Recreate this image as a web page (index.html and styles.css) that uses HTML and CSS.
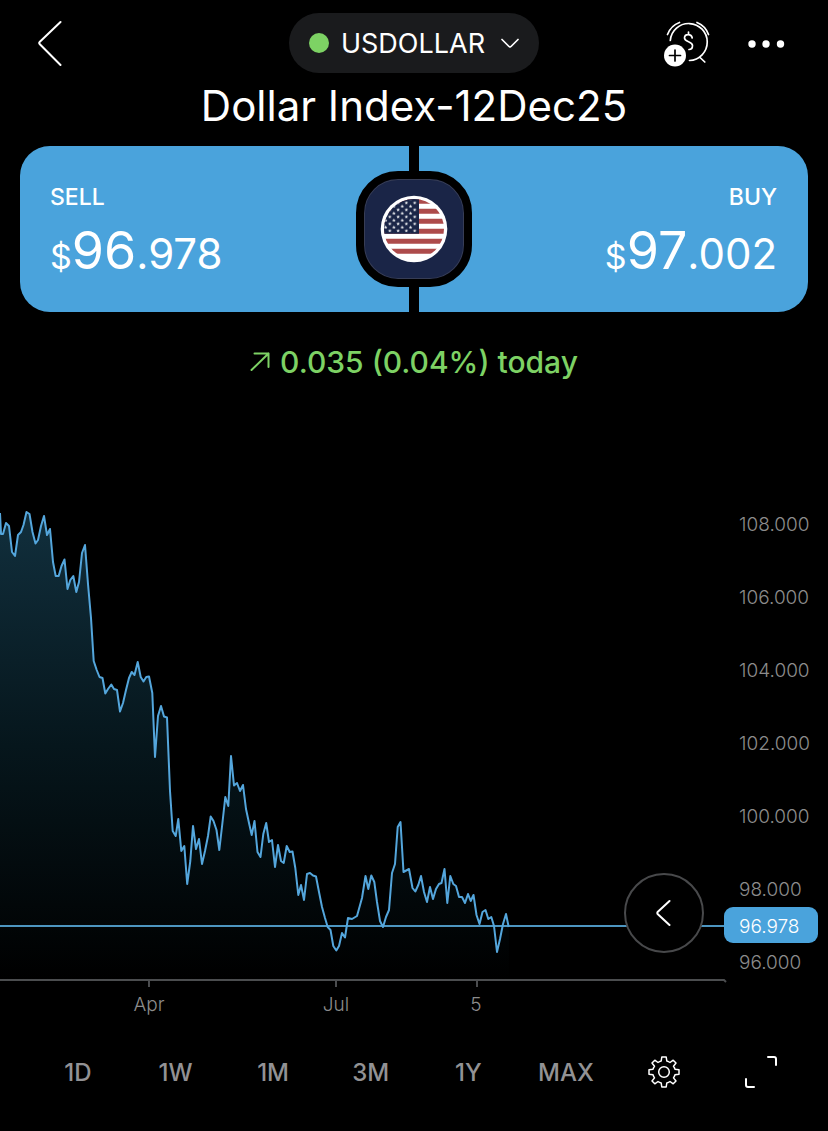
FILE: index.html
```html
<!DOCTYPE html>
<html lang="en">
<head>
<meta charset="utf-8">
<meta name="viewport" content="width=device-width, initial-scale=1">
<title>USDOLLAR</title>
<link rel="stylesheet" href="styles.css">
</head>
<body>
<header class="topbar">
  <button class="icon-button back" type="button" aria-label="Back">
    <svg width="26" height="48" viewBox="0 0 26 48" fill="none" stroke="#fff" stroke-width="2" stroke-linecap="round" stroke-linejoin="round"><path d="M22.500 3 1.600 23Q.8 24 1.600 25L22.500 46"/></svg>
  </button>
  <button class="symbol" type="button">
    <span class="status"></span>
    <span>USDOLLAR</span>
    <svg width="18" height="12" viewBox="0 0 18 12" fill="none" stroke="#fff" stroke-width="1.700" stroke-linecap="round" stroke-linejoin="round"><path d="M1 2.500 8 9.500Q9 10.500 10 9.500L17 2.500"/></svg>
  </button>
  <div class="actions">
    <button class="icon-button" type="button" aria-label="Add price alert">
      <svg width="48" height="48" viewBox="0 0 48 48" fill="none" stroke="#fff" stroke-width="1.700" stroke-linecap="round">
        <path d="M8.300 21.500A18.500 18.500 0 1 1 27.500 41.500M37.500 38 42.800 43"/>
        <path d="M5.500 15.500Q9 6.500 17.500 3.500M35 3.500Q43.500 7 46.500 15.500"/>
        <path d="M30.200 19C29.500 14.500 22.500 14.500 22.500 19 22.500 23.500 30.500 22 30.500 26.500 30.500 29 29 30.500 27 30.500M26.500 15V13"/>
        <circle cx="13" cy="36.500" r="11" fill="#fff" stroke="none"/>
        <path d="M13 31V42M7.500 36.500H18.500" stroke="#000"/>
      </svg>
    </button>
    <button class="icon-button" type="button" aria-label="More">
      <svg width="38" height="10" viewBox="0 0 38 10" fill="#fff"><circle cx="5" cy="6" r="3.700"/><circle cx="19" cy="6" r="3.700"/><circle cx="33.500" cy="6" r="3.700"/></svg>
    </button>
  </div>
</header>

<main>
  <h1 class="title">Dollar Index-12Dec25</h1>

  <section class="quotes">
    <button class="quote sell" type="button">
      <span class="side">SELL</span>
      <span class="price"><span class="currency">$</span><span class="whole">96</span>.978</span>
    </button>
    <button class="quote buy" type="button">
      <span class="side">BUY</span>
      <span class="price"><span class="currency">$</span><span class="whole">97</span>.002</span>
    </button>
    <div class="badge">
      <svg width="68" height="68" viewBox="0 0 68 68" role="img" aria-label="United States flag">
        <defs>
          <clipPath id="disc"><circle cx="34" cy="34" r="30"/></clipPath>
          <pattern id="stars" x="-.5" y="5.700" width="8.300" height="7" patternUnits="userSpaceOnUse">
            <path id="star" d="M2 .4 2.500 1.500 3.700 1.600 2.800 2.400 3.100 3.600 2 3 .9 3.600 1.200 2.400.3 1.600 1.500 1.500Z" fill="#fff"/>
            <use href="#star" x="4.150" y="3.400"/>
          </pattern>
        </defs>
        <circle cx="34" cy="34" r="33.300" fill="#fff"/>
        <g clip-path="url(#disc)">
          <path d="M0 3.700H68V8.700H0ZM0 13.700H68V18.700H0ZM0 23.700H68V28.700H0ZM0 33.700H68V38.700H0ZM0 43.700H68V48.700H0ZM0 53.700H68V58.700H0Z" fill="#ad4b4b"/>
          <path d="M0 0H39V38.700H0Z" fill="#1a2547"/>
          <path d="M3 5.700H37V37.300H3Z" fill="url(#stars)"/>
        </g>
      </svg>
    </div>
  </section>

  <p class="change">
    <svg width="20" height="20" viewBox="0 0 20 20" fill="none" stroke="currentColor" stroke-width="2" stroke-linecap="round" stroke-linejoin="round"><path d="M1.500 18 18.500 1.500M4.500 1.500H18.500V15"/></svg>
    <span>0.035 (0.04%) today</span>
  </p>

  <section class="chart">
    <svg class="plot" viewBox="0 490 828 530" role="img" aria-label="Price history">
      <defs>
        <linearGradient id="fade" gradientUnits="userSpaceOnUse" x1="0" y1="512" x2="0" y2="980">
          <stop offset="0" stop-color="#112f3d"/><stop offset=".5" stop-color="#06161c"/><stop offset="1" stop-color="#000"/>
        </linearGradient>
      </defs>
      <path class="area" d="M0 513 1 534 3 534 6 523 9 526 12 552 15 556 18 535 21 532 23.500 525 26.500 512 29.500 514 32.500 532 35.500 543.500 38 540 41 526 44 516 47 535 50 529 53 562 55.700 576 58.700 576 61.500 566 64.500 559.500 67.500 589 70.300 580 73.300 576 76.300 592 79 582 82 553 85 545 88 584 91 618 93.700 661 96.700 670 99.500 677 102.500 678 105.300 693.500 108 689 111.300 684.500 114 689 117 690 120 711.500 123 703 126 690 129 678 131.700 672 134.500 675 137.700 662 140.700 677 143.500 681.500 146.300 677 149 676.500 152.300 693 155 757 158 716 161 706 164 716.500 167 717.500 170 791 172.700 831 175.700 836 178.300 819 181.300 851 184.300 846 187.200 884 190.300 861 193 826 196 849 199 839 202 864 205 851 208 836 210.700 816.500 213.500 821 216.500 830 219.300 850 222.300 824 225.300 797 228.300 806 231 756 234 785.500 237 783 240 791 243 785 246 809 249 823 251.700 835 254.500 821 257.500 852 260.500 857 263.300 834 266.200 823 269 842 272 840 275 867 278 845 281 861 283.700 863 286.700 846 292.500 851.500 298.300 895 301 885 304 900 307 874 316 876.500 327.700 927 333.300 946 339 946 348 918 357 916 365.500 876 371.300 875.500 383 927 389 910 397.700 827 400.500 822 403.500 872 409 869 415.300 891.500 421 876 427 902 444.500 869 447.300 903 450.300 876 462 897 473.500 895 479.500 924 494 926 497 952 506 914 509 927V980H0Z"/>
      <path class="axis" d="M0 980H724L726 982M149 980V987M336 980V987M477 980V987"/>
      <path class="level" d="M0 926H726"/>
      <path class="line" d="M0 513 1 534 3 534 6 523 9 526 12 552 15 556 18 535 21 532 23.500 525 26.500 512 29.500 514 32.500 532 35.500 543.500 38 540 41 526 44 516 47 535 50 529 53 562 55.700 576 58.700 576 61.500 566 64.500 559.500 67.500 589 70.300 580 73.300 576 76.300 592 79 582 82 553 85 545 88 584 91 618 93.700 661 96.700 670 99.500 677 102.500 678 105.300 693.500 108 689 111.300 684.500 114 689 117 690 120 711.500 123 703 126 690 129 678 131.700 672 134.500 675 137.700 662 140.700 677 143.500 681.500 146.300 677 149 676.500 152.300 693 155 757 158 716 161 706 164 716.500 167 717.500 170 791 172.700 831 175.700 836 178.300 819 181.300 851 184.300 846 187.200 884 190.300 861 193 826 196 849 199 839 202 864 205 851 208 836 210.700 816.500 213.500 821 216.500 830 219.300 850 222.300 824 225.300 797 228.300 806 231 756 234 785.500 237 783 240 791 243 785 246 809 249 823 251.700 835 254.500 821 257.500 852 260.500 857 263.300 834 266.200 823 269 842 272 840 275 867 278 845 281 861 283.700 863 286.700 846 289.700 852 292.500 851.500 295.300 868 298.300 895 301 885 304 900 307 874 310 873 313 875.500 316 876.500 319 892 322 907 325 918 327.700 927 330.500 930 333.300 946 336.300 950.500 339 946 342 933 345 937.500 348 918 352 919 357 916 362 898 365.500 876 368.300 889 371.300 875.500 374.300 882 377 902 380 921 383 927 386 917 389 910 392 873 395 864 397.700 827 400.500 822 403.500 872 409 869 412.500 888 415.300 891.500 418.300 885 421 876 424 892 427 902 430 887 433 899 436 889 439 884 441.500 883 444.500 869 447.300 903 450.300 876 453.300 884 456 886 459 897 462 897 465 903 468 894 470.700 901 473.500 895 476.500 915 479.500 924 482.500 912 485.500 910 488.300 919 491.300 917 494 926 497 952 500 939 503 924 506 914 508.700 927"/>
      <g class="ticks">
        <text x="739" y="531">108.000</text>
        <text x="739" y="604">106.000</text>
        <text x="739" y="677">104.000</text>
        <text x="739" y="750">102.000</text>
        <text x="739" y="823">100.000</text>
        <text x="739" y="896">98.000</text>
        <text x="739" y="969">96.000</text>
      </g>
      <g class="ticks dates">
        <text x="149" y="1011">Apr</text>
        <text x="336" y="1011">Jul</text>
        <text x="476" y="1011">5</text>
      </g>
      <rect class="tag" x="724" y="907" width="94" height="36" rx="9"/>
      <text class="tag-text" x="739" y="933">96.978</text>
    </svg>
    <button class="scroll-back" type="button" aria-label="Earlier prices">
      <svg width="16" height="28" viewBox="0 0 16 28" fill="none" stroke="#fff" stroke-width="2" stroke-linecap="round" stroke-linejoin="round"><path d="M13.500 2 1.600 13Q1 14 1.600 15L13.500 26"/></svg>
    </button>
  </section>
</main>

<nav class="ranges" aria-label="Chart range">
  <button type="button">1D</button>
  <button type="button">1W</button>
  <button type="button">1M</button>
  <button type="button">3M</button>
  <button type="button">1Y</button>
  <button type="button">MAX</button>
  <button type="button" aria-label="Chart settings">
    <svg width="32" height="32" viewBox="0 0 32 32" fill="none" stroke="#fff" stroke-width="1.500" stroke-linejoin="round"><circle cx="16" cy="16" r="5.300"/><path d="M13.800 1H18.200L18.800 5Q20.600 5.500 22 6.500L25.200 4.200 28 7 25.500 10.200Q26.500 11.600 27 13.300L31 13.800V18.200L27 18.800Q26.500 20.500 25.500 21.900L28 25 25.200 27.800 22 25.500Q20.600 26.500 18.800 27L18.200 31H13.800L13.200 27Q11.400 26.500 10 25.500L6.800 27.800 4 25 6.500 21.900Q5.500 20.500 5 18.800L1 18.200V13.800L5 13.300Q5.500 11.600 6.500 10.200L4 7 6.800 4.200 10 6.500Q11.400 5.500 13.200 5Z"/></svg>
  </button>
  <button type="button" aria-label="Full screen">
    <svg width="34" height="34" viewBox="0 0 34 34" fill="none" stroke="#fff" stroke-width="2" stroke-linecap="round"><path d="M24 2H30Q32 2 32 4V10M2 24V30Q2 32 4 32H10"/></svg>
  </button>
</nav>
</body>
</html>
```
FILE: styles.css
```css
* { box-sizing: border-box; }

body {
  margin: 0;
  background: #000;
  color: #fff;
  font-family: Inter, "Liberation Sans", sans-serif;
}

button {
  margin: 0;
  padding: 0;
  border: 0;
  background: none;
  color: inherit;
  font: inherit;
  cursor: pointer;
}

svg { display: block; }

.topbar {
  display: grid;
  grid-template-columns: 1fr auto 1fr;
  align-items: center;
  padding: 13px 38px 0;
}

.back { justify-self: start; }

.symbol {
  display: flex;
  align-items: center;
  gap: 12px;
  height: 60px;
  padding: 0 20px;
  border-radius: 30px;
  background: #1a1b1d;
  font-size: 27px;
}

.symbol svg { margin-left: 4px; }

.status {
  width: 20px;
  height: 20px;
  border-radius: 50%;
  background: #7dd264;
}

.actions {
  display: flex;
  align-items: center;
  justify-content: flex-end;
  gap: 37px;
  padding-right: 5px;
}

.title {
  margin: 6px 0 14px;
  font-size: 42px;
  font-weight: 400;
  line-height: 53px;
  text-align: center;
}

.quotes {
  position: relative;
  display: grid;
  grid-template-columns: 1fr 1fr;
  gap: 10px;
  margin: 0 20px;
}

.quote {
  display: flex;
  flex-direction: column;
  height: 166px;
  padding: 36px 31px 0 30px;
  background: #4aa3dc;
  text-align: left;
}

.sell { border-radius: 30px 0 0 30px; }

.buy {
  border-radius: 0 30px 30px 0;
  align-items: flex-end;
}

.side {
  font-size: 23px;
  font-weight: 500;
  line-height: 30px;
}

.price {
  font-size: 42px;
  line-height: 78px;
}

.currency { font-size: 34px; }
.whole { font-size: 52px; }

.badge {
  position: absolute;
  inset: 0;
  display: grid;
  place-content: center;
  width: 116px;
  height: 116px;
  margin: auto;
  border: 8px solid #000;
  border-radius: 42px;
  background: #1a2547;
  box-shadow: inset 0 0 0 1px #373d55;
}

.change {
  display: flex;
  align-items: center;
  justify-content: center;
  gap: 10px;
  margin: 32px 0 0;
  color: #7dd264;
  font-size: 30px;
  font-weight: 500;
  line-height: 36px;
}

.chart {
  position: relative;
  margin-top: 110px;
}

.plot {
  width: 100%;
  height: auto;
}

.area { fill: url(#fade); }

.line, .axis, .level {
  fill: none;
  stroke-width: 2px;
}

.line {
  stroke: #54a6dc;
  stroke-linejoin: round;
}

.axis { stroke: #4b4d4f; }
.level { stroke: #4d95c0; }

.ticks {
  fill: #8c8c8c;
  font-size: 19px;
  font-weight: 300;
}

.dates { text-anchor: middle; }

.tag { fill: #4aa3dc; }

.tag-text {
  fill: #fff;
  font-size: 19px;
  font-weight: 300;
}

.scroll-back {
  position: absolute;
  top: 383px;
  right: 124px;
  display: grid;
  place-content: center;
  width: 80px;
  height: 80px;
  border: 2px solid #48494b;
  border-radius: 50%;
  background: #000;
}

.ranges {
  display: grid;
  grid-template-columns: repeat(8, 1fr);
  margin-top: 27px;
  padding: 0 18px 0 29px;
  color: #929294;
  font-size: 24px;
  font-weight: 500;
}

.ranges button {
  display: grid;
  place-items: center;
  height: 50px;
}
```
